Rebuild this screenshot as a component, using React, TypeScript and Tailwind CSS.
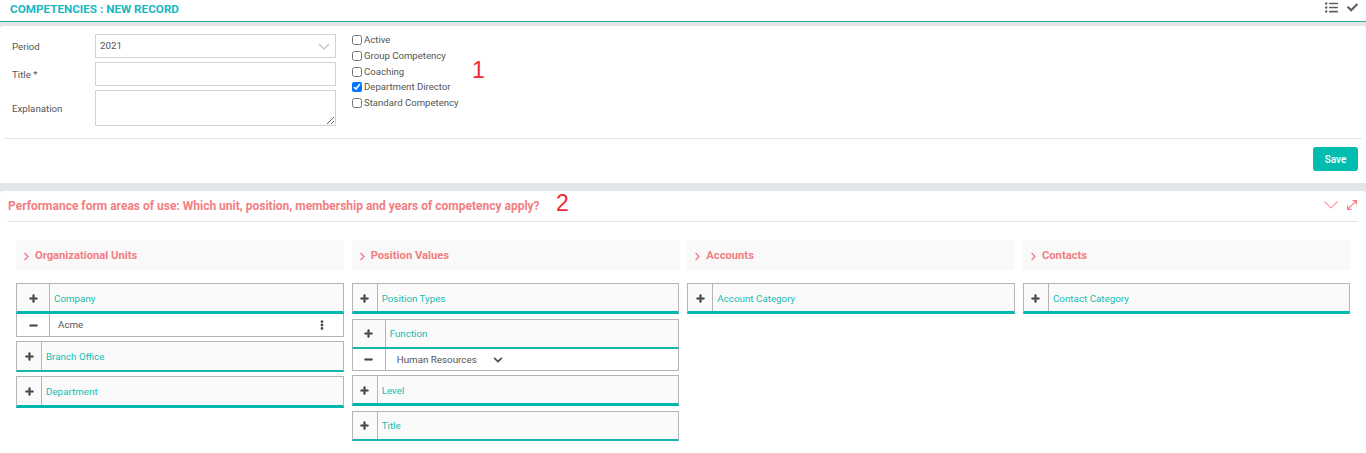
import { FaListUl, FaCheck, FaPlus, FaMinus, FaEllipsisV, FaChevronDown, FaChevronRight } from "react-icons/fa";

const font = { teal: "text-[#16bdb3]", coral: "text-[#f27e83]" };

function Field({ label, className = "", children }: { label: string; className?: string; children: React.ReactNode }) {
  return (
    <div className={`flex items-center ${className}`}>
      <label className="w-[83px] pt-[2px] text-[9.7px] text-[#555]">{label}</label>
      {children}
    </div>
  );
}

function Check({ label, checked = false, height }: { label: string; checked?: boolean; height: string }) {
  return (
    <label className={`flex items-center text-[9.6px] leading-none text-[#555] ${height}`}>
      <input type="checkbox" defaultChecked={checked} className="m-0 mr-[2px] h-[10px] w-[10px]" />
      {label}
    </label>
  );
}

function RowHead({
  title,
  wide = false,
  thick = true,
  height = "h-[31px]",
  className = "",
}: {
  title: string;
  wide?: boolean;
  thick?: boolean;
  height?: string;
  className?: string;
}) {
  return (
    <div
      className={`flex border-x border-t border-[#b5b5b5] bg-[#fafafa] ${height} ${thick ? "border-b-[3px] border-b-[#00b8ae]" : "border-b-2 border-b-[#17b5ab]"} ${className}`}
    >
      <div className={`flex shrink-0 items-center justify-center border-r border-[#b5b5b5] ${thick ? "pt-px" : ""} ${wide ? "w-[33px]" : "w-[25px]"}`}>
        <FaPlus className="text-[9px] text-[#4a4a4a] stroke-[30px]" />
      </div>
      <div className={`flex items-center pl-1 text-[9.8px] ${thick ? "pt-[3px]" : "pt-[2px]"} ${font.teal}`}>{title}</div>
    </div>
  );
}

function ColHead({ title }: { title: string }) {
  return (
    <div className={`flex h-[30px] items-center bg-[#f9f9f9] pl-[6px] pt-[2px] text-[11.2px] font-bold ${font.coral}`}>
      <FaChevronRight className="mr-1 text-[9px]" />
      {title}
    </div>
  );
}

export default function App() {
  return (
    <div className="flex h-[453px] flex-col overflow-hidden bg-[#e2e6ea] font-['Roboto',sans-serif]">
      <div className="flex h-[22px] shrink-0 items-start justify-between border-b border-[#2aa89c] bg-white pl-[10px] pr-[8px]">
        <h1 className="mt-[2px] text-[11.7px] font-bold leading-[14px] text-[#17b8bf]">COMPETENCIES : NEW RECORD</h1>
        <div className="flex items-center gap-[9px] pt-px text-[#5f5f5f]">
          <FaListUl className="text-[13px]" />
          <FaCheck className="text-[11px]" />
        </div>
      </div>

      <div className="relative mt-1 h-[157px] shrink-0 rounded-t-[3px] bg-white">
        <div className="flex px-[12px] pt-2">
          <div className="w-[324px]">
            <Field label="Period" className="h-6">
              <div className="flex h-6 flex-1 items-center justify-between border border-[#d2d2d2] pl-1 pr-[5px] pt-px text-[9.8px] text-[#555]">
                2021
                <svg viewBox="0 0 12 7" className="h-[7px] w-3" fill="none" stroke="#c4c4c4" strokeWidth="1.3">
                  <path d="M1 1l5 5 5-5" />
                </svg>
              </div>
            </Field>
            <Field label="Title *" className="mt-1 h-6">
              <input className="h-6 flex-1 border border-[#d2d2d2]" />
            </Field>
            <Field label="Explanation" className="mt-1 h-9">
              <textarea className="h-9 flex-1 border border-[#d2d2d2]" />
            </Field>
          </div>
          <div className="ml-4 -mt-[2px]">
            <Check label="Active" height="h-[16px]" />
            <Check label="Group Competency" height="h-[16px]" />
            <Check label="Coaching" height="h-[15px]" />
            <Check label="Department Director" checked height="h-[16px]" />
            <Check label="Standard Competency" height="h-[16px]" />
          </div>
        </div>
        <span className="absolute left-[472px] top-[33px] font-['Liberation_Sans',sans-serif] text-[23px] leading-none text-[#ee2a33]">1</span>
        <div className="mx-1 mt-3 border-t border-[#e5e5e5]" />
        <div className="flex justify-end pr-2 pt-2">
          <button className="h-6 w-[45px] rounded-[3px] bg-[#00bdb0] text-[10px] font-medium text-white">Save</button>
        </div>
      </div>

      <div className="relative mt-2 flex-1 rounded-t-[3px] bg-white">
        <div className="ml-[7px] mr-2 flex h-[31px] items-center justify-between border-b border-[#e5e5e5] pr-px">
          <h2 className={`pl-px text-[12px] font-bold ${font.coral}`}>
            Performance form areas of use: Which unit, position, membership and years of competency apply?
          </h2>
          <div className="mb-[2px] flex items-center gap-[9px]">
            <svg viewBox="0 0 14 8" className="h-2 w-[14px]" fill="none" stroke="#f8a0a4" strokeWidth="1.2">
              <path d="M.5.5L7 7l6.500-6.500" />
            </svg>
            <svg viewBox="0 0 10 10" className="h-[10px] w-[10px]" fill="none" stroke="#f27e83" strokeWidth="1.2">
              <path d="M5.500.6h3.900v3.900M9.400.6L.6 9.400M.6 5.500v3.900h3.900" />
            </svg>
          </div>
        </div>
        <span className="absolute left-[556px] top-px font-['Liberation_Sans',sans-serif] text-[23px] leading-none text-[#ee2a33]">2</span>

        <div className="grid grid-cols-4 items-start gap-x-[7.67px] pl-4 pr-[15px] pt-[18px]">
          <div>
            <ColHead title="Organizational Units" />
            <div className="mt-[13px]">
              <RowHead title="Company" wide />
              <div className="flex h-[23px] border-x border-b border-[#b5b5b5] bg-white">
                <div className="flex w-[33px] shrink-0 items-center justify-center border-r border-[#b5b5b5]">
                  <FaMinus className="text-[9px] text-[#4a4a4a] stroke-[30px]" />
                </div>
                <div className="flex flex-1 items-center justify-between pl-2 pr-[16px] text-[9.8px] text-[#555]">
                  Acme
                  <FaEllipsisV className="text-[10px] text-[#4a4a4a]" />
                </div>
              </div>
              <RowHead title="Branch Office" thick={false} className="mt-[4px]" />
              <RowHead title="Department" height="h-[32px]" className="mt-[4px]" />
            </div>
          </div>
          <div>
            <ColHead title="Position Values" />
            <div className="mr-px mt-[13px]">
              <RowHead title="Position Types" />
              <RowHead title="Function" wide thick={false} height="h-[30px]" className="mt-[5px]" />
              <div className="flex h-[22px] border-x border-b border-[#b5b5b5] bg-white">
                <div className="flex w-[33px] shrink-0 items-center justify-center border-r border-[#b5b5b5]">
                  <FaMinus className="text-[9px] text-[#4a4a4a] stroke-[30px]" />
                </div>
                <div className="flex flex-1 items-center pl-[11px] pt-px text-[9.8px] text-[#555]">
                  Human Resources
                  <FaChevronDown className="ml-[16px] text-[10px] text-[#4a4a4a]" />
                </div>
              </div>
              <RowHead title="Level" className="mt-[4px]" />
              <RowHead title="Title" thick={false} height="h-[30px]" className="mt-[5px]" />
            </div>
          </div>
          <div>
            <ColHead title="Accounts" />
            <div className="mt-[13px]">
              <RowHead title="Account Category" />
            </div>
          </div>
          <div>
            <ColHead title="Contacts" />
            <div className="mr-px mt-[13px]">
              <RowHead title="Contact Category" />
            </div>
          </div>
        </div>
      </div>
    </div>
  );
}
